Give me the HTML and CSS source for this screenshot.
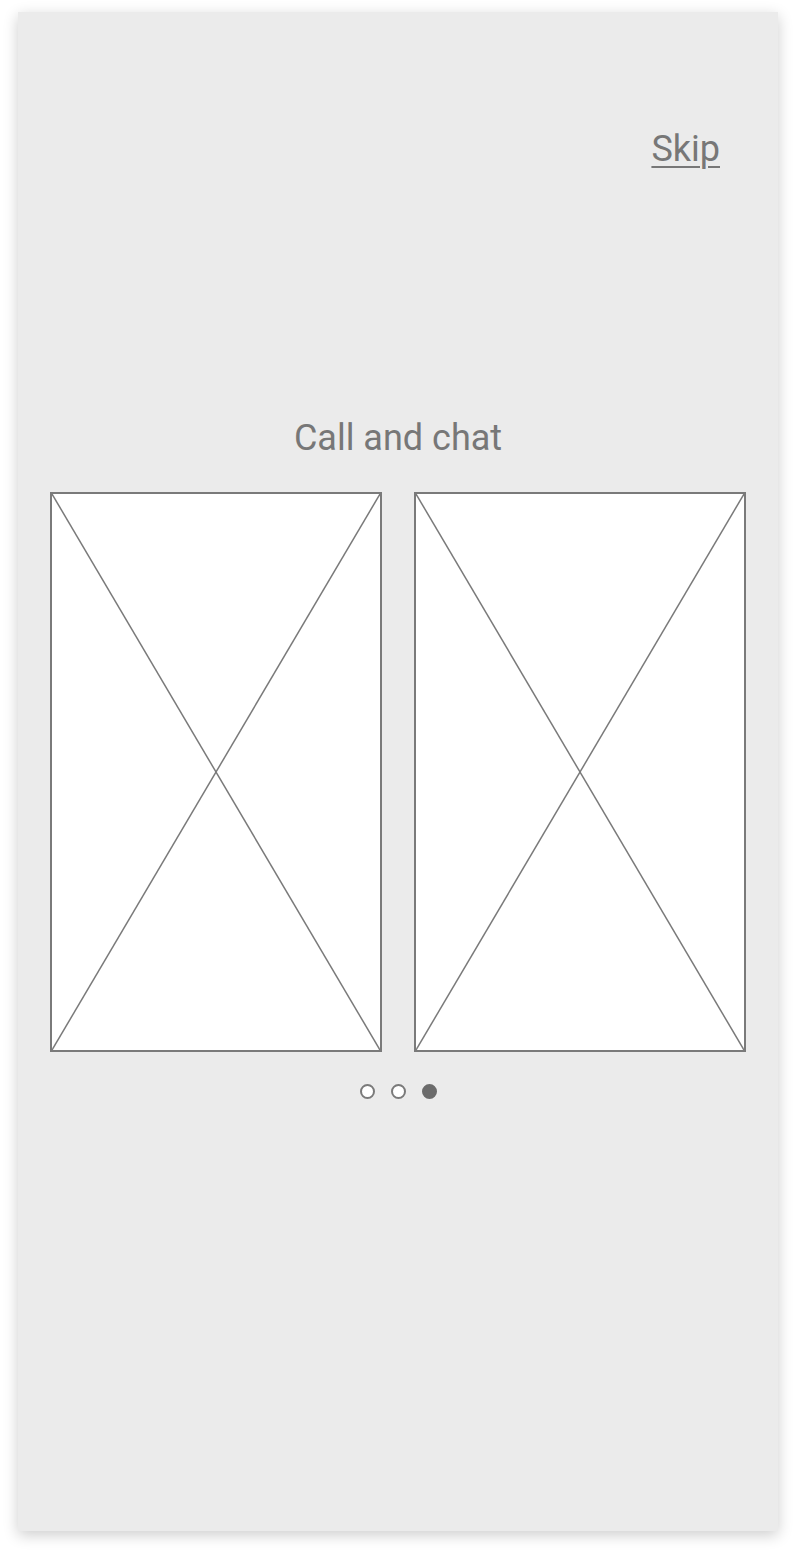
FILE: index.html
```html
<!DOCTYPE html>
<html>
<head>
<meta charset="utf-8">
<link rel="stylesheet" href="styles.css">
</head>
<body>
<div class="screen">
  <div class="top-bar"><a class="skip" href="#">Skip</a></div>
  <h1 class="title">Call and chat</h1>
  <div class="gallery">
    <div class="placeholder">
      <svg viewBox="0 0 100 100" preserveAspectRatio="none"><line x1="0" y1="0" x2="100" y2="100" vector-effect="non-scaling-stroke"/><line x1="100" y1="0" x2="0" y2="100" vector-effect="non-scaling-stroke"/></svg>
    </div>
    <div class="placeholder">
      <svg viewBox="0 0 100 100" preserveAspectRatio="none"><line x1="0" y1="0" x2="100" y2="100" vector-effect="non-scaling-stroke"/><line x1="100" y1="0" x2="0" y2="100" vector-effect="non-scaling-stroke"/></svg>
    </div>
  </div>
  <div class="dots">
    <span class="dot"></span>
    <span class="dot"></span>
    <span class="dot active"></span>
  </div>
</div>
</body>
</html>
```
FILE: styles.css
```css
html, body {
  margin: 0;
  padding: 0;
  background: #ffffff;
}
body {
  padding: 12px 18px 25px 18px;
  font-family: Roboto, "Liberation Sans", sans-serif;
}
.screen {
  width: 760px;
  height: 1519px;
  box-sizing: border-box;
  background: #ebebeb;
  box-shadow: 0 4px 14px rgba(0, 0, 0, 0.2);
  padding: 116px 32px 0 32px;
  display: flex;
  flex-direction: column;
}
.top-bar {
  display: flex;
  justify-content: flex-end;
  padding-right: 26px;
}
.skip {
  font-size: 36px;
  line-height: 42px;
  color: #777777;
  text-decoration: underline;
  text-decoration-thickness: 2px;
  text-underline-offset: 5px;
}
.title {
  margin: 247px 0 0 0;
  font-size: 36px;
  line-height: 42px;
  font-weight: 400;
  color: #777777;
  text-align: center;
}
.gallery {
  margin-top: 33px;
  display: flex;
  gap: 32px;
}
.placeholder {
  flex: 1;
  height: 560px;
  box-sizing: border-box;
  background: #ffffff;
  border: 2px solid #7a7a7a;
}
.placeholder svg {
  display: block;
  width: 100%;
  height: 100%;
}
.placeholder line {
  stroke: #7a7a7a;
  stroke-width: 1.5;
}
.dots {
  margin-top: 32px;
  display: flex;
  justify-content: center;
  gap: 16px;
}
.dot {
  width: 15px;
  height: 15px;
  box-sizing: border-box;
  border-radius: 50%;
  background: #ffffff;
  border: 2px solid #7a7a7a;
}
.dot.active {
  background: #6b6b6b;
  border-color: #6b6b6b;
}
```
